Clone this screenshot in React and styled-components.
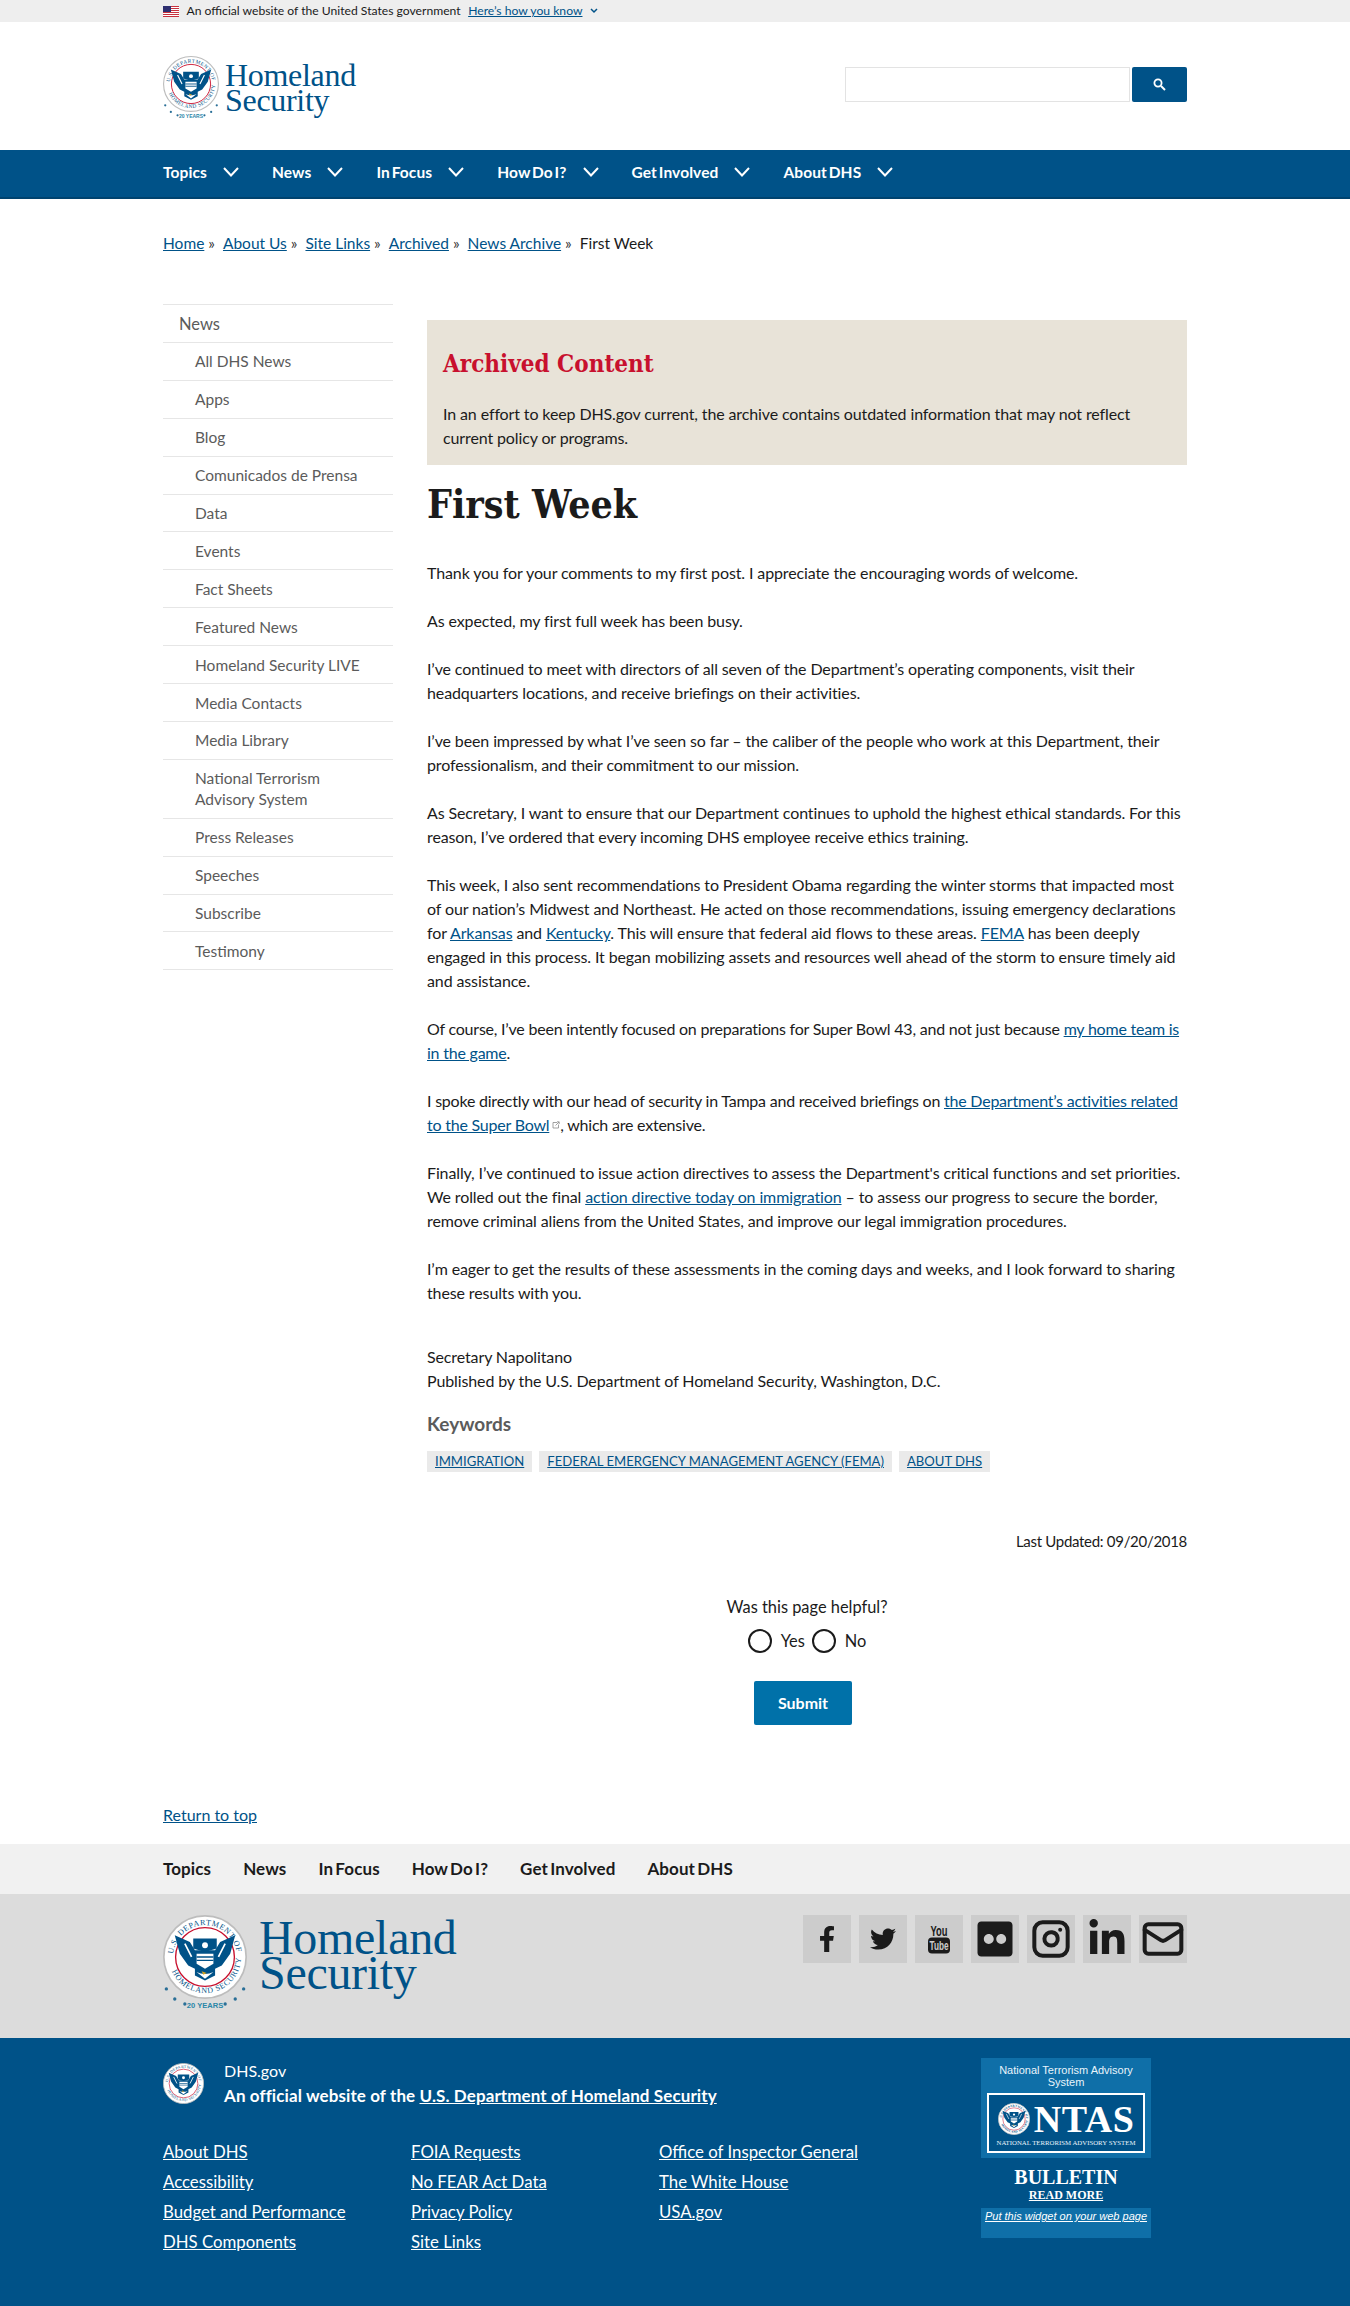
import { useId } from "react";
import styled, { createGlobalStyle } from "styled-components";
import { FaFacebookF, FaTwitter, FaFlickr, FaLinkedinIn } from "react-icons/fa";
import { Instagram, Mail } from "lucide-react";

const GlobalStyle = createGlobalStyle`
  html, body { margin: 0; padding: 0; background: #fff; }
  body {
    font-family: Lato, "Noto Sans", sans-serif;
    font-size: 16px;
    line-height: 24px;
    color: #1b1b1b;
  }
  a { color: #005288; }
`;

const Wrap = styled.div`
  width: 1024px;
  margin: 0 auto;
`;

const Banner = styled.div`
  background: #eeeeee;
  height: 22px;
  font-size: 12.15px;
  line-height: 22px;
`;

const BannerRow = styled(Wrap)`
  display: flex;
  align-items: center;
  gap: 7.5px;
`;

const Header = styled(Wrap)`
  height: 128px;
  box-sizing: border-box;
  padding-top: 4px;
  display: flex;
  align-items: center;
  justify-content: space-between;
`;

const LogoLink = styled.div`
  display: flex;
  align-items: center;
  gap: ${(p) => p.$gap}px;
`;

const LogoText = styled.div`
  font-family: "Liberation Serif", serif;
  color: #005288;
  font-size: ${(p) => p.$size}px;
  line-height: ${(p) => p.$line}px;
  margin-bottom: ${(p) => p.$lift || 0}px;
  letter-spacing: -0.3px;
`;

const Search = styled.div`
  display: flex;
  gap: 2px;
  align-self: flex-start;
  margin-top: 41px;
`;

const SearchInput = styled.div`
  width: 283px;
  height: 33px;
  border: 1px solid #e3e3e3;
  background: #fff;
`;

const SearchButton = styled.div`
  width: 55px;
  height: 35px;
  background: #005288;
  border-radius: 2px;
  display: flex;
  align-items: center;
  justify-content: center;
`;

const NavBar = styled.nav`
  background: #005288;
  height: 47px;
  border-bottom: 2px solid #00436f;
`;

const NavRow = styled(Wrap)`
  display: flex;
  align-items: center;
  height: 44px;
  gap: 33px;
`;

const NavItem = styled.div`
  display: flex;
  align-items: center;
  gap: 16px;
  color: #fff;
  font-weight: 700;
  font-size: 15.5px;
  letter-spacing: 0.1px;
  word-spacing: -2px;
`;

const Crumbs = styled(Wrap)`
  padding-top: 32px;
  height: 73px;
  font-size: 15.5px;
  display: flex;
  gap: 4px;
  span.sep { margin-right: 4px; color: #333; }
`;

const Main = styled(Wrap)`
  display: grid;
  grid-template-columns: 230px 760px;
  column-gap: 34px;
  align-items: start;
`;

const SideList = styled.ul`
  list-style: none;
  margin: 0;
  padding: 0;
  border-top: 1px solid #e6e6e6;
`;

const SideItem = styled.li`
  padding: 8.5px 16px 7.5px ${(p) => (p.$top ? 16 : 32)}px;
  line-height: 20.9px;
  border-bottom: 1px solid #e6e6e6;
  color: #5b5b5b;
  font-size: ${(p) => (p.$top ? 16.5 : 15.5)}px;
`;

const Content = styled.div`
  padding-top: 16px;
  letter-spacing: -0.12px;
`;

const Archived = styled.div`
  background: #e8e3d8;
  padding: 27px 16px 3px;
  height: 115px;
  h2 {
    margin: 0 0 21px;
    font-family: "DejaVu Serif Condensed", "DejaVu Serif", serif;
    font-size: 24px;
    line-height: 34px;
    letter-spacing: 0;
    color: #c8102e;
  }
  p { margin: 0; }
`;

const Title = styled.h1`
  margin: 11px 0 29px;
  font-family: "DejaVu Serif Condensed", "DejaVu Serif", serif;
  font-size: 39px;
  line-height: 56px;
  letter-spacing: 0;
  color: #1b1b1b;
`;

const Para = styled.p`
  margin: 0 0 24px;
  letter-spacing: ${(p) => (p.$tight ? "-0.22px" : "inherit")};
`;

const ExternalIcon = styled.svg`
  margin-left: 3px;
  vertical-align: 2px;
`;

const Signature = styled.p`
  margin: 40px 0 0;
`;

const KeywordHead = styled.h3`
  margin: 16px 0 0;
  font-size: 19px;
  line-height: 30px;
  letter-spacing: 0;
  color: #5b5b5b;
`;

const Tags = styled.div`
  display: flex;
  gap: 7px;
  margin-top: 12px;
`;

const Tag = styled.a`
  background: #eaeaea;
  padding: 0 8px;
  font-size: 13.1px;
  line-height: 21px;
  letter-spacing: 0;
`;

const Updated = styled.div`
  margin-top: 57px;
  text-align: right;
  font-size: 15px;
  letter-spacing: -0.3px;
`;

const Helpful = styled.div`
  margin-top: 42px;
  display: flex;
  flex-direction: column;
  align-items: center;
  font-size: 16.4px;
  letter-spacing: 0;
`;

const RadioRow = styled.div`
  margin-top: 10px;
  display: flex;
  align-items: center;
`;

const Radio = styled.span`
  width: 24px;
  height: 24px;
  box-sizing: border-box;
  border: 2px solid #1b1b1b;
  border-radius: 50%;
  margin-right: 9px;
  background: #fff;
`;

const RadioLabel = styled.span`
  margin-right: 7px;
  &:last-child { margin-right: 0; }
`;

const Submit = styled.div`
  margin-top: 28px;
  width: 98px;
  height: 44px;
  margin-left: -8px;
  background: #0071a9;
  border-radius: 2px;
  color: #fff;
  font-weight: 700;
  font-size: 16px;
  display: flex;
  align-items: center;
  justify-content: center;
`;

const ReturnTop = styled(Wrap)`
  height: 41px;
  margin-top: 78px;
`;

const FootNav = styled.div`
  background: #f1f1f1;
  height: 50px;
`;

const FootNavRow = styled(Wrap)`
  display: flex;
  align-items: center;
  gap: 32px;
  height: 50px;
  font-weight: 700;
  font-size: 17px;
  letter-spacing: 0.1px;
  word-spacing: -2px;
`;

const FootBrand = styled.div`
  background: #dcdcdc;
  height: 144px;
`;

const FootBrandRow = styled(Wrap)`
  display: flex;
  justify-content: space-between;
  padding-top: 21px;
`;

const Socials = styled.div`
  display: flex;
  gap: 8px;
  align-self: flex-start;
`;

const Social = styled.div`
  width: 48px;
  height: 48px;
  background: #cccccc;
  color: #1b1b1b;
  display: flex;
  align-items: center;
  justify-content: center;
`;

const FootBlue = styled.footer`
  background: #005288;
  height: 269px;
  color: #fff;
  a { color: #fff; }
`;

const FootGrid = styled(Wrap)`
  display: flex;
  justify-content: space-between;
  padding-top: 20px;
`;

const OrgRow = styled.div`
  display: flex;
  gap: 20px;
  align-items: center;
  margin-bottom: 32px;
`;

const OrgName = styled.div`
  line-height: 25px;
  strong {
    font-weight: 700;
    font-size: 17px;
    letter-spacing: 0.1px;
  }
`;

const LinkCols = styled.div`
  display: grid;
  grid-template-columns: repeat(3, 248px);
  font-size: 16.8px;
`;

const LinkCol = styled.div`
  display: flex;
  flex-direction: column;
  align-items: flex-start;
  gap: 6px;
`;

const Widget = styled.div`
  width: 170px;
  margin-right: 36px;
  font-family: "Liberation Sans", Arial, sans-serif;
  text-align: center;
`;

const WidgetTop = styled.div`
  background: #0f6fa8;
  height: 100px;
  padding: 6px 6px 0;
  box-sizing: border-box;
  font-size: 11px;
  line-height: 12px;
  color: #e8f4fb;
`;

const NtasBox = styled.div`
  margin-top: 5px;
  height: 60px;
  box-sizing: border-box;
  border: 2px solid #fff;
  background: #005288;
  display: flex;
  flex-direction: column;
  align-items: center;
  justify-content: center;
`;

const NtasMain = styled.div`
  display: flex;
  align-items: center;
  gap: 4px;
  font-family: "Liberation Serif", serif;
  font-size: 38px;
  line-height: 38px;
  font-weight: 700;
  letter-spacing: 0.5px;
  color: #fff;
`;

const NtasSub = styled.div`
  font-family: "Liberation Serif", serif;
  font-size: 6.8px;
  line-height: 9px;
  white-space: nowrap;
`;

const Bulletin = styled.div`
  font-family: "Liberation Serif", serif;
  font-weight: 700;
  color: #fff;
  font-size: 20px;
  line-height: 20px;
  margin-top: 9px;
`;

const ReadMore = styled.a`
  display: block;
  font-family: "Liberation Serif", serif;
  font-weight: 700;
  font-size: 12px;
  line-height: 16px;
`;

const WidgetBottom = styled.div`
  margin-top: 5px;
  background: #0f6fa8;
  height: 30px;
  font-size: 11px;
  line-height: 16px;
  font-style: italic;
`;

function Seal({ size, stars }) {
  const id = useId();
  const h = stars ? size * 1.14 : size;
  return (
    <svg width={size} height={h} viewBox={`0 0 100 ${stars ? 114 : 100}`} aria-hidden="true">
      <defs>
        <path id={`${id}t`} d="M12 50a38 38 0 0 1 76 0" />
        <path id={`${id}b`} d="M7 50a43 43 0 0 0 86 0" />
      </defs>
      <circle cx="50" cy="50" r="49" fill="#fff" stroke="#bdbdbd" strokeWidth="2" />
      <circle cx="50" cy="50" r="35" fill="#fff" stroke="#c8102e" strokeWidth="1.6" />
      <text fontSize="9.5" fontFamily="Liberation Serif, serif" fill="#005288" letterSpacing="0.8">
        <textPath href={`#${id}t`} startOffset="3%">U.S. DEPARTMENT OF</textPath>
      </text>
      <text fontSize="9.5" fontFamily="Liberation Serif, serif" fill="#005288" letterSpacing="0.8">
        <textPath href={`#${id}b`} startOffset="13%">HOMELAND SECURITY</textPath>
      </text>
      <path d="M14 24l18 8 6 10 24 0 6-10 18-8-6 22-10 14-8 4 0 8-12 6-12-6 0-8-8-4-10-14z" fill="#005288" />
      <path d="M36 28h28v12l-14 4-14-4z" fill="#005288" />
      <path d="M26 34l8 16M74 34l-8 16" stroke="#fff" strokeWidth="2" />
      <path d="M40 46h20v12l-10 6-10-6z" fill="#fff" />
      <path d="M40 50h20M40 54h20" stroke="#005288" strokeWidth="1.6" />
      <circle cx="50" cy="36" r="3.5" fill="#fff" />
      <path d="M40 68c6 3 14 3 20 0l-10 8z" fill="#fff" />
      <path d="M46 67l6 2-4 2z" fill="#d9a520" />
      {stars && (
        <g fill="#2a6f97">
          <circle cx="4" cy="88" r="2" />
          <circle cx="14" cy="100" r="2" />
          <circle cx="26" cy="106" r="2" />
          <circle cx="74" cy="106" r="2" />
          <circle cx="86" cy="100" r="2" />
          <circle cx="96" cy="88" r="2" />
          <text x="50" y="111" textAnchor="middle" fontSize="9" fontFamily="Liberation Sans, sans-serif" fontWeight="700" fill="#2a86a8">
            20 YEARS
          </text>
        </g>
      )}
    </svg>
  );
}

function Flag() {
  return (
    <svg width="16" height="11" viewBox="0 0 16 11" aria-hidden="true">
      <rect width="16" height="11" fill="#fff" />
      {[0, 2, 4, 6, 8, 10].map((y) => (
        <rect key={y} y={y} width="16" height="1" fill="#c8313e" />
      ))}
      <rect width="8" height="6" fill="#2e2f70" />
    </svg>
  );
}

function Chevron() {
  return (
    <svg width="16" height="10" viewBox="0 0 16 10" aria-hidden="true">
      <path d="M1 1l7 7.5L15 1" fill="none" stroke="#fff" strokeWidth="2" />
    </svg>
  );
}

function YouTubeStack() {
  return (
    <svg width="24" height="32" viewBox="0 0 24 32" aria-hidden="true">
      <text x="12" y="12.5" textAnchor="middle" fontSize="14" fontWeight="700" fontFamily="Liberation Sans, sans-serif" fill="#1b1b1b" textLength="17" lengthAdjust="spacingAndGlyphs">You</text>
      <rect x="1" y="14.5" width="22" height="16" rx="4" fill="#1b1b1b" />
      <text x="12" y="27" textAnchor="middle" fontSize="13" fontWeight="700" fontFamily="Liberation Sans, sans-serif" fill="#ccc" textLength="19" lengthAdjust="spacingAndGlyphs">Tube</text>
    </svg>
  );
}

const navLabels = ["Topics", "News", "In Focus", "How Do I?", "Get Involved", "About DHS"];

const sideLinks = [
  "All DHS News", "Apps", "Blog", "Comunicados de Prensa", "Data", "Events", "Fact Sheets",
  "Featured News", "Homeland Security LIVE", "Media Contacts", "Media Library",
  "National Terrorism Advisory System", "Press Releases", "Speeches", "Subscribe", "Testimony",
];

const crumbs = ["Home", "About Us", "Site Links", "Archived", "News Archive"];

const footCols = [
  ["About DHS", "Accessibility", "Budget and Performance", "DHS Components"],
  ["FOIA Requests", "No FEAR Act Data", "Privacy Policy", "Site Links"],
  ["Office of Inspector General", "The White House", "USA.gov"],
];

export default function App() {
  return (
    <>
      <GlobalStyle />
      <Banner>
        <BannerRow>
          <Flag />
          <span>An official website of the United States government</span>
          <a href="#know">Here’s how you know</a>
          <svg width="8" height="6" viewBox="0 0 8 6" aria-hidden="true">
            <path d="M1 1l3 3 3-3" fill="none" stroke="#005288" strokeWidth="1.5" />
          </svg>
        </BannerRow>
      </Banner>
      <Header>
        <LogoLink $gap={6}>
          <Seal size={56} stars />
          <LogoText $size={32} $line={25}>Homeland<br />Security</LogoText>
        </LogoLink>
        <Search>
          <SearchInput />
          <SearchButton>
            <svg width="13" height="13" viewBox="0 0 13 13" aria-hidden="true">
              <circle cx="5" cy="5" r="3.6" fill="none" stroke="#fff" strokeWidth="1.8" />
              <path d="M8 8l4 4" stroke="#fff" strokeWidth="2" />
            </svg>
          </SearchButton>
        </Search>
      </Header>
      <NavBar>
        <NavRow>
          {navLabels.map((l) => (
            <NavItem key={l}>{l}<Chevron /></NavItem>
          ))}
        </NavRow>
      </NavBar>
      <Crumbs>
        {crumbs.map((c) => (
          <span key={c}>
            <a href="#c">{c}</a> <span className="sep">»</span>
          </span>
        ))}
        <span>First Week</span>
      </Crumbs>
      <Main>
        <aside>
          <SideList>
            <SideItem $top>News</SideItem>
            {sideLinks.map((s) => (
              <SideItem key={s}>{s}</SideItem>
            ))}
          </SideList>
        </aside>
        <Content>
          <Archived>
            <h2>Archived Content</h2>
            <p>In an effort to keep DHS.gov current, the archive contains outdated information that may not reflect current policy or programs.</p>
          </Archived>
          <Title>First Week</Title>
          <Para>Thank you for your comments to my first post. I appreciate the encouraging words of welcome.</Para>
          <Para>As expected, my first full week has been busy.</Para>
          <Para>I’ve continued to meet with directors of all seven of the Department’s operating components, visit their headquarters locations, and receive briefings on their activities.</Para>
          <Para>I’ve been impressed by what I’ve seen so far – the caliber of the people who work at this Department, their professionalism, and their commitment to our mission.</Para>
          <Para>As Secretary, I want to ensure that our Department continues to uphold the highest ethical standards. For this reason, I’ve ordered that every incoming DHS employee receive ethics training.</Para>
          <Para>This week, I also sent recommendations to President Obama regarding the winter storms that impacted most of our nation’s Midwest and Northeast. He acted on those recommendations, issuing emergency declarations for <a href="#a">Arkansas</a> and <a href="#k">Kentucky</a>. This will ensure that federal aid flows to these areas. <a href="#f">FEMA</a> has been deeply engaged in this process. It began mobilizing assets and resources well ahead of the storm to ensure timely aid and assistance.</Para>
          <Para $tight>Of course, I’ve been intently focused on preparations for Super Bowl 43, and not just because <a href="#h">my home team is in the game</a>.</Para>
          <Para $tight>
            I spoke directly with our head of security in Tampa and received briefings on <a href="#s">the Department’s activities related to the Super Bowl
              <ExternalIcon width="8" height="8" viewBox="0 0 8 8" aria-hidden="true">
                <path d="M5 1.5H1v5.5h5.5V3.5M3.5 4.5L7 1M5 .8h2.2V3" fill="none" stroke="#8a8a8a" strokeWidth="0.8" />
              </ExternalIcon>
            </a>, which are extensive.
          </Para>
          <Para>Finally, I’ve continued to issue action directives to assess the Department's critical functions and set priorities. We rolled out the final <a href="#i">action directive today on immigration</a> – to assess our progress to secure the border, remove criminal aliens from the United States, and improve our legal immigration procedures.</Para>
          <Para>I’m eager to get the results of these assessments in the coming days and weeks, and I look forward to sharing these results with you.</Para>
          <Signature>Secretary Napolitano<br />Published by the U.S. Department of Homeland Security, Washington, D.C.</Signature>
          <KeywordHead>Keywords</KeywordHead>
          <Tags>
            <Tag href="#1">IMMIGRATION</Tag>
            <Tag href="#2">FEDERAL EMERGENCY MANAGEMENT AGENCY (FEMA)</Tag>
            <Tag href="#3">ABOUT DHS</Tag>
          </Tags>
          <Updated>Last Updated: 09/20/2018</Updated>
          <Helpful>
            <div>Was this page helpful?</div>
            <RadioRow>
              <Radio /><RadioLabel>Yes</RadioLabel>
              <Radio /><RadioLabel>No</RadioLabel>
            </RadioRow>
            <Submit>Submit</Submit>
          </Helpful>
        </Content>
      </Main>
      <ReturnTop><a href="#top">Return to top</a></ReturnTop>
      <FootNav>
        <FootNavRow>
          {navLabels.map((l) => (<span key={l}>{l}</span>))}
        </FootNavRow>
      </FootNav>
      <FootBrand>
        <FootBrandRow>
          <LogoLink $gap={12}>
            <Seal size={84} stars />
            <LogoText $size={48} $line={35} $lift={16}>Homeland<br />Security</LogoText>
          </LogoLink>
          <Socials>
            <Social><FaFacebookF size={26} /></Social>
            <Social><FaTwitter size={26} /></Social>
            <Social><YouTubeStack /></Social>
            <Social><FaFlickr size={40} /></Social>
            <Social><Instagram size={40} strokeWidth={2.4} /></Social>
            <Social><FaLinkedinIn size={40} /></Social>
            <Social><Mail size={44} strokeWidth={2.2} /></Social>
          </Socials>
        </FootBrandRow>
      </FootBrand>
      <FootBlue>
        <FootGrid>
          <div>
            <OrgRow>
              <Seal size={41} />
              <OrgName>
                DHS.gov<br />
                <strong>An official website of the <a href="#dhs">U.S. Department of Homeland Security</a></strong>
              </OrgName>
            </OrgRow>
            <LinkCols>
              {footCols.map((col, i) => (
                <LinkCol key={i}>
                  {col.map((l) => (<a key={l} href="#l">{l}</a>))}
                </LinkCol>
              ))}
            </LinkCols>
          </div>
          <Widget>
            <WidgetTop>
              National Terrorism Advisory System
              <NtasBox>
                <NtasMain><Seal size={32} />NTAS</NtasMain>
                <NtasSub>NATIONAL TERRORISM ADVISORY SYSTEM</NtasSub>
              </NtasBox>
            </WidgetTop>
            <Bulletin>BULLETIN</Bulletin>
            <ReadMore href="#r">READ MORE</ReadMore>
            <WidgetBottom><a href="#w">Put this widget on your web page</a></WidgetBottom>
          </Widget>
        </FootGrid>
      </FootBlue>
    </>
  );
}
